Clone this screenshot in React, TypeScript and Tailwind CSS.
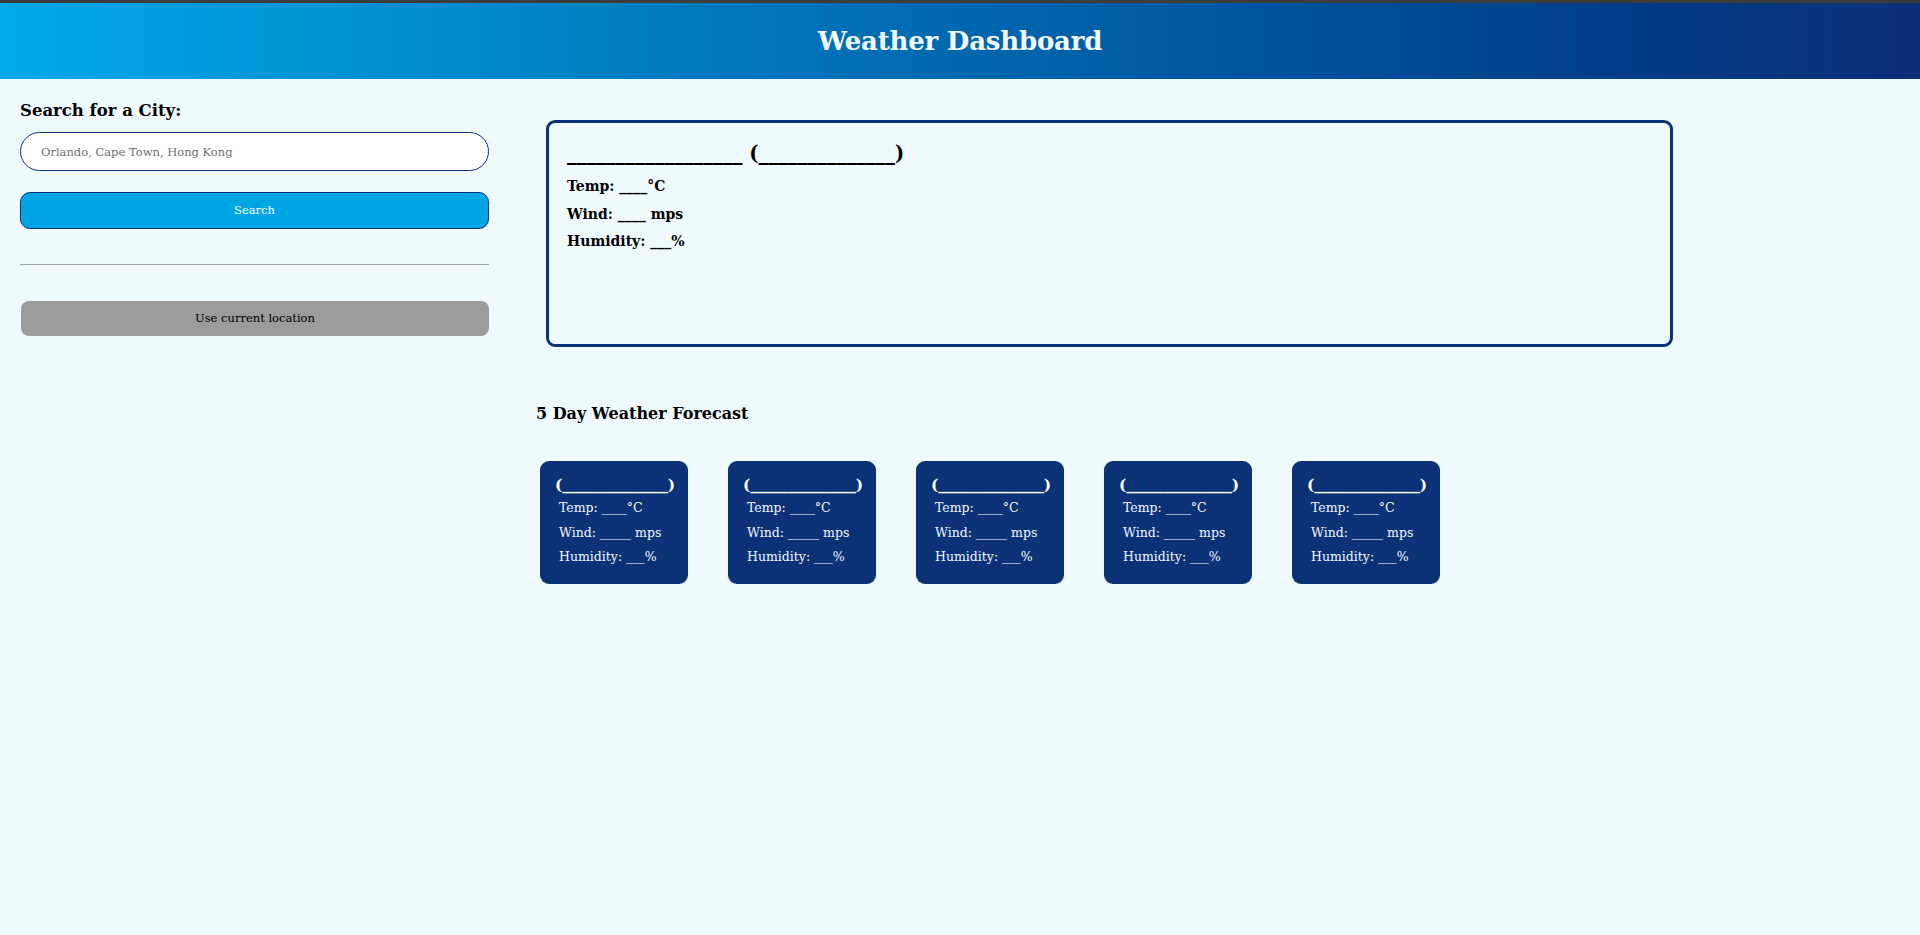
import React from "react";

const serif = { fontFamily: '"DejaVu Serif", "Liberation Serif", serif' };

function ForecastCard() {
  return (
    <div className="w-[148px] h-[123px] rounded-[9px] bg-[#0b3277] text-white pl-[15px] pt-[13px]">
      <div className="text-[15.5px] font-bold leading-[22px] tracking-[-0.2px]">(______________)</div>
      <div className="pl-[4px] text-[12.5px] leading-[24.5px] text-[#f3f8ff]">
        <p>Temp: ____°C</p>
        <p>Wind: _____ mps</p>
        <p>Humidity: ___%</p>
      </div>
    </div>
  );
}

export default function App() {
  return (
    <div className="min-h-[935px] bg-[#effaff] text-black" style={serif}>
      <div className="h-[3px] bg-[#3c3c3c]" />
      <header className="h-[76px] flex items-center justify-center bg-linear-to-r from-[#00a9e9] via-[#003d89] via-[84%] to-[#0c2f76]">
        <h1 className="text-[26px] font-bold text-[#f2faff] tracking-[-0.2px]">Weather Dashboard</h1>
      </header>

      <main className="flex">
        <aside className="w-[509px] shrink-0 px-5 pt-[20px]">
          <h2 className="text-[16.5px] font-bold leading-[24px]">Search for a City:</h2>
          <input
            type="text"
            placeholder="Orlando, Cape Town, Hong Kong"
            className="mt-[9px] block w-full h-[39px] rounded-full border border-[#0b3277] bg-white pl-[20px] text-[11.5px] placeholder:text-[#6f6f6f] outline-none"
          />
          <button className="mt-[21px] block w-full h-[37px] rounded-[10px] border border-[#0b3277] bg-[#00a6e4] text-[11.5px] text-white">
            Search
          </button>
          <hr className="mt-[35px] border-0 h-px bg-[#a3a3a3]" />
          <button className="mt-[36px] block w-[468px] ml-px h-[35px] rounded-[8px] bg-[#9b9b9b] text-[11.5px] text-black">
            Use current location
          </button>
        </aside>

        <section className="flex-1 pl-[27px] pt-[41px]">
          <div className="ml-[10px] w-[1127px] h-[227px] rounded-[9px] border-[3px] border-[#0b3277] pl-[18px] pt-[17px]">
            <div className="text-[19.5px] font-bold leading-[28px]">__________________ (______________)</div>
            <div className="mt-[5px] text-[14px] font-bold leading-[27.5px]">
              <p>Temp: ____°C</p>
              <p>Wind: ____ mps</p>
              <p>Humidity: ___%</p>
            </div>
          </div>

          <h3 className="mt-[55px] text-[16px] font-bold leading-[24px]">5 Day Weather Forecast</h3>

          <div className="mt-[35px] ml-[4px] flex gap-[40px]">
            <ForecastCard />
            <ForecastCard />
            <ForecastCard />
            <ForecastCard />
            <ForecastCard />
          </div>
        </section>
      </main>
    </div>
  );
}
